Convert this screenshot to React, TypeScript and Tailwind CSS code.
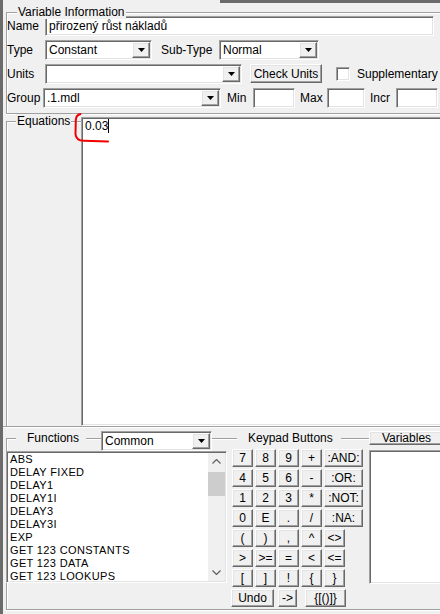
import React from "react";

const sunken =
  "border border-t-[#a0a0a0] border-l-[#a0a0a0] border-b-white border-r-white shadow-[inset_1px_1px_0_#696969,inset_-1px_-1px_0_#e3e3e3] bg-white p-[1px]";
const raised =
  "border border-t-white border-l-white border-b-[#696969] border-r-[#696969] shadow-[inset_-1px_-1px_0_#a0a0a0,inset_1px_1px_0_#e3e3e3] bg-[#f0f0f0]";

function DropBtn() {
  return (
    <div className={`${raised} w-[18px] h-full flex items-center justify-center shrink-0`}>
      <svg width="7" height="4" viewBox="0 0 7 4">
        <path d="M0 0H7L3.5 4Z" fill="#000" />
      </svg>
    </div>
  );
}

function Combo({ className, text }: { className: string; text?: string }) {
  return (
    <div className={`${sunken} flex items-stretch shrink-0 ${className}`}>
      <div className="flex-1 pl-[2px] flex items-center overflow-hidden whitespace-nowrap">{text}</div>
      <DropBtn />
    </div>
  );
}

function Field({ className, text }: { className: string; text?: string }) {
  return (
    <div className={`${sunken} flex items-center shrink-0 ${className}`}>
      <div className="pl-[2px] whitespace-nowrap overflow-hidden">{text}</div>
    </div>
  );
}

function Key({ label, className }: { label: string; className?: string }) {
  return (
    <div className={`${raised} h-[18px] flex items-center justify-center shrink-0 ${className ?? "w-[21px]"}`}>
      {label}
    </div>
  );
}

function Chevron({ up }: { up?: boolean }) {
  return (
    <svg width="9" height="5" viewBox="0 0 9 5">
      <polyline
        points={up ? "0.5,4.5 4.5,0.5 8.5,4.5" : "0.5,0.5 4.5,4.5 8.5,0.5"}
        fill="none"
        stroke="#606060"
        strokeWidth="1.2"
      />
    </svg>
  );
}

const functions = [
  "ABS",
  "DELAY FIXED",
  "DELAY1",
  "DELAY1I",
  "DELAY3",
  "DELAY3I",
  "EXP",
  "GET 123 CONSTANTS",
  "GET 123 DATA",
  "GET 123 LOOKUPS",
];

const keyRows: string[][] = [
  ["7", "8", "9", "+", ":AND:"],
  ["4", "5", "6", "-", ":OR:"],
  ["1", "2", "3", "*", ":NOT:"],
  ["0", "E", ".", "/", ":NA:"],
  ["(", ")", ",", "^", "<>"],
  [">", ">=", "=", "<", "<="],
  ["[", "]", "!", "{", "}"],
];

export default function App() {
  return (
    <div className="w-[440px] h-[614px] bg-[#f0f0f0] flex overflow-hidden relative font-['Liberation_Sans',Arial,sans-serif] text-[12px] leading-[14px] text-black">
      <div className="w-[3px] shrink-0 bg-[#6b6b6b]" />
      <div className="flex-1 flex flex-col min-w-0">
        <div className="h-[3px] shrink-0 flex">
          <div className="ml-[217px] flex-1 bg-[#6b6b6b]" />
        </div>

        {/* Variable Information */}
        <div className="relative mt-[9px] ml-[3px] w-[450px] h-[102px] shrink-0 border border-[#a0a0a0] shadow-[inset_1px_1px_0_#fff,0_1px_0_#fff] pt-[3px] flex flex-col gap-[4px]">
          <div className="absolute left-[10px] -top-[8px] px-[1px] bg-[#f0f0f0] whitespace-nowrap">
            Variable Information
          </div>
          <div className="flex items-center h-[20px]">
            <span className="w-[38px] shrink-0">Name</span>
            <Field className="w-[389px] h-full" text="přirozený růst nákladů" />
          </div>
          <div className="flex items-center h-[20px]">
            <span className="w-[38px] shrink-0">Type</span>
            <Combo className="w-[107px] h-full" text="Constant" />
            <span className="ml-[9px] w-[58px] shrink-0 whitespace-nowrap">Sub-Type</span>
            <Combo className="w-[100px] h-full" text="Normal" />
          </div>
          <div className="flex items-center h-[20px]">
            <span className="w-[38px] shrink-0">Units</span>
            <Combo className="w-[197px] h-full" />
            <div className={`${raised} ml-[8px] w-[72px] h-[19px] self-start flex items-center justify-center shrink-0 whitespace-nowrap`}>
              Check Units
            </div>
            <div className={`${sunken} ml-[14px] w-[14px] h-[14px] shrink-0`} />
            <span className="ml-[7px] whitespace-nowrap">Supplementary</span>
          </div>
          <div className="flex items-center h-[20px]">
            <span className="w-[36px] shrink-0">Group</span>
            <Combo className="w-[178px] h-full" text=".1.mdl" />
            <span className="ml-[6px] w-[26px] shrink-0">Min</span>
            <Field className="w-[42px] h-full" />
            <span className="ml-[5px] w-[27px] shrink-0">Max</span>
            <Field className="w-[38px] h-full" />
            <span className="ml-[5px] w-[26px] shrink-0">Incr</span>
            <Field className="w-[42px] h-full" />
          </div>
        </div>

        {/* Equations */}
        <div className="flex h-[313px] shrink-0 w-[450px] border-b border-[#a0a0a0] shadow-[0_1px_0_#fff]">
          <div className="relative ml-[3px] mt-[7px] w-[75px] shrink-0 border-l border-t border-[#a0a0a0] shadow-[inset_1px_1px_0_#fff]">
            <div className="absolute left-[9px] -top-[8px] px-[1px] bg-[#f0f0f0] whitespace-nowrap">Equations</div>
          </div>
          <div className={`${sunken} mt-[3px] h-[309px] w-[370px] shrink-0`}>
            <div className="pl-[2px] flex items-start">
              <span>0.03</span>
              <span className="inline-block w-[1px] h-[14px] bg-black" />
            </div>
          </div>
        </div>

        {/* Bottom panel */}
        <div className="relative mt-[11px] ml-[3px] w-[450px] h-[172px] shrink-0 border-l border-t border-b border-[#a0a0a0] shadow-[inset_1px_1px_0_#fff,0_1px_0_#fff] flex flex-col">
          <div className="-mt-[9px] h-[20px] flex items-start shrink-0">
            <div className="ml-[9px] mt-[1px] w-[70px] h-[14px] pl-[11px] bg-[#f0f0f0] whitespace-nowrap shrink-0">
              Functions
            </div>
            <Combo className="ml-[15px] mt-[1px] w-[111px] h-[20px]" text="Common" />
            <div className="ml-[25px] mt-[1px] w-[104px] h-[14px] pl-[11px] bg-[#f0f0f0] whitespace-nowrap shrink-0">
              Keypad Buttons
            </div>
            <div className={`${raised} ml-[28px] mt-[1px] w-[75px] h-[14px] flex items-center justify-center shrink-0`}>
              Variables
            </div>
          </div>
          <div className="flex items-start">
            {/* function list */}
            <div className={`${sunken} -ml-[1px] mt-[1px] w-[221px] h-[132px] flex shrink-0`}>
              <div className="flex-1 overflow-hidden pl-[2px]">
                {functions.map((f) => (
                  <div key={f} className="h-[13px] leading-[13px] text-[11px] tracking-[0.35px] whitespace-nowrap">
                    {f}
                  </div>
                ))}
              </div>
              <div className="w-[17px] bg-[#f0f0f0] flex flex-col shrink-0">
                <div className="h-[17px] flex items-center justify-center">
                  <Chevron up />
                </div>
                <div className="mt-[2px] h-[24px] bg-[#cdcdcd]" />
                <div className="flex-1" />
                <div className="h-[17px] flex items-center justify-center">
                  <Chevron />
                </div>
              </div>
            </div>

            {/* keypad */}
            <div className="ml-[5px] -mt-[1px] w-[132px] shrink-0 flex flex-col gap-[2px]">
              {keyRows.map((row, i) => (
                <div key={i} className="flex gap-[2px] h-[18px]">
                  {row.map((k, j) => (
                    <Key key={k} label={k} className={j === 4 ? (i < 4 ? "w-[39px]" : "w-[21px]") : "w-[21px]"} />
                  ))}
                </div>
              ))}
              <div className="flex h-[18px]">
                <Key label="Undo" className="-ml-[1px] w-[43px]" />
                <Key label="->" className="ml-[4px] w-[19px]" />
                <Key label="{[()]}" className="ml-[8px] w-[41px]" />
              </div>
            </div>

            {/* variables list */}
            <div className={`${sunken} ml-[5px] w-[80px] h-[134px] shrink-0`} />
          </div>
        </div>
      </div>

      {/* red annotation */}
      <svg className="absolute inset-0 pointer-events-none" width="440" height="614" viewBox="0 0 440 614">
        <path
          d="M80.5 114 Q76 115 75.8 120 L75.5 134 Q75.8 140.5 84 140.8 L108 141.5"
          fill="none"
          stroke="#f00000"
          strokeWidth="2"
          strokeLinecap="round"
        />
      </svg>
    </div>
  );
}
